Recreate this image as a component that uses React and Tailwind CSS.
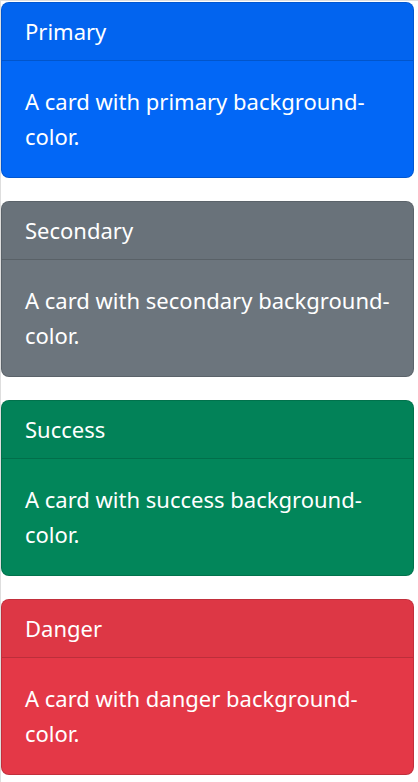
export default function App() {
  const cards = [
    { title: "Primary", bg: "bg-[#0267f6]", hd: "bg-[#0264ef]", name: "primary" },
    { title: "Secondary", bg: "bg-[#6c757d]", hd: "bg-[#69727a]", name: "secondary" },
    { title: "Success", bg: "bg-[#02865a]", hd: "bg-[#028258]", name: "success" },
    { title: "Danger", bg: "bg-[#e43847]", hd: "bg-[#dd3745]", name: "danger" },
  ];
  return (
    <div className="w-[418px] h-[782px] bg-white border-l border-t border-[#dedede] pt-px pr-[4px] flex flex-col gap-[23px]" style={{ fontFamily: '"Noto Sans", "Open Sans", sans-serif' }}>
      {cards.map((c) => (
        <div key={c.name} className={`${c.bg} text-white rounded-[8px] border border-black/15 overflow-hidden`}>
          <div className={`${c.hd} px-[23px] py-[11px] text-[22px] leading-[35px] border-b border-black/15`}>{c.title}</div>
          <div className="px-[23px] py-[23px] text-[22px] leading-[35px]">
            A card with {c.name} background-color.
          </div>
        </div>
      ))}
    </div>
  );
}
